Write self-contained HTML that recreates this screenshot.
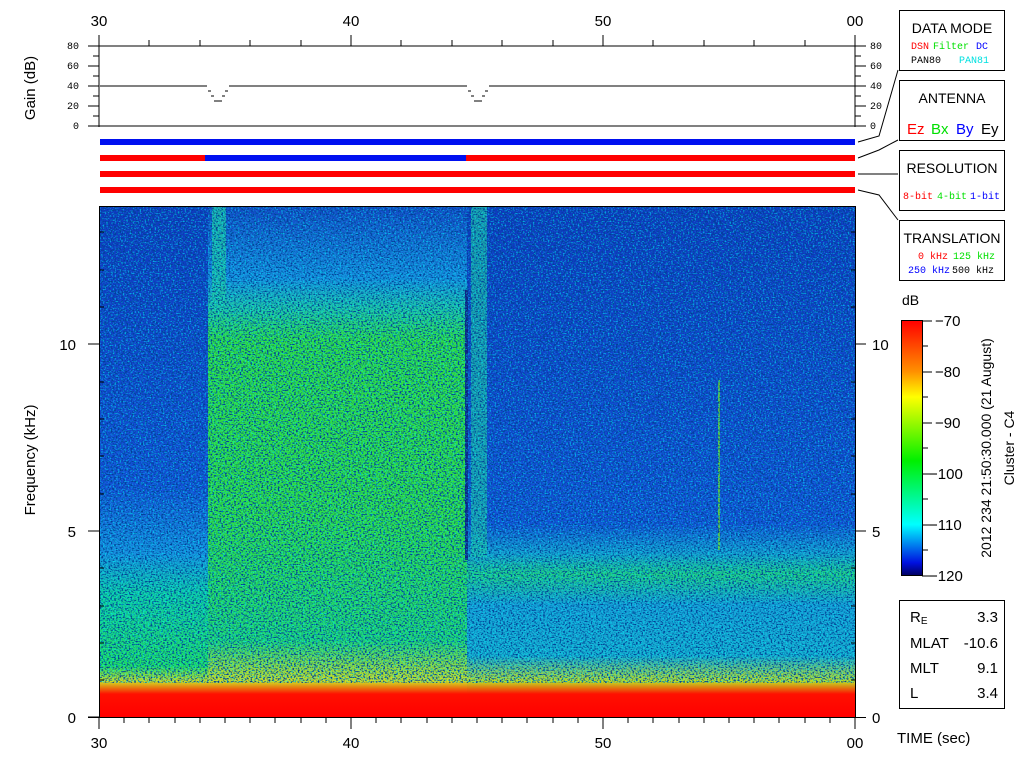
<!DOCTYPE html>
<html><head><meta charset="utf-8"><style>
html,body{margin:0;padding:0;background:#fff;width:1024px;height:768px;overflow:hidden}
svg text{font-family:"Liberation Sans",sans-serif}
svg .m text{font-family:"Liberation Mono",monospace}
</style></head><body>
<svg width="1024" height="768" viewBox="0 0 1024 768" xmlns="http://www.w3.org/2000/svg">
<defs>
<filter id="nz" x="0" y="0" width="100%" height="100%">
<feTurbulence type="fractalNoise" baseFrequency="0.55 0.7" numOctaves="1" seed="3" result="t"/>
<feColorMatrix in="t" type="matrix" values="0 0 0 0 0  0 0 0 0 0.05  0 0 0 0 0.3  0 0 0 4.5 -2.1"/>
</filter>
<filter id="nz2" x="0" y="0" width="100%" height="100%">
<feTurbulence type="fractalNoise" baseFrequency="0.6 0.75" numOctaves="1" seed="9" result="t"/>
<feColorMatrix in="t" type="matrix" values="0 0 0 0 0  0 0 0 0 0.9  0 0 0 0 1  0 0 0 4.5 -2.3"/>
</filter>
<linearGradient id="gl" x1="0" y1="0" x2="0" y2="1">
<stop offset="0" stop-color="#1038c0"/><stop offset="0.55" stop-color="#1450d8"/>
<stop offset="0.68" stop-color="#1890e0"/><stop offset="0.76" stop-color="#10d0a0"/>
<stop offset="0.9" stop-color="#20e060"/><stop offset="0.93" stop-color="#d0e020"/>
<stop offset="0.955" stop-color="#ff1000"/><stop offset="1" stop-color="#ff0000"/>
</linearGradient>
<linearGradient id="gg" x1="0" y1="0" x2="0" y2="1">
<stop offset="0" stop-color="#1448c8"/><stop offset="0.14" stop-color="#1890e0"/>
<stop offset="0.2" stop-color="#20c8a0"/><stop offset="0.26" stop-color="#30e040"/>
<stop offset="0.6" stop-color="#30e040"/><stop offset="0.85" stop-color="#20d870"/>
<stop offset="0.93" stop-color="#d0e020"/><stop offset="0.955" stop-color="#ff1000"/><stop offset="1" stop-color="#ff0000"/>
</linearGradient>
<linearGradient id="gr" x1="0" y1="0" x2="0" y2="1">
<stop offset="0" stop-color="#1038c0"/><stop offset="0.62" stop-color="#1450d8"/>
<stop offset="0.68" stop-color="#18a0d0"/><stop offset="0.72" stop-color="#20d080"/>
<stop offset="0.78" stop-color="#18a0d8"/><stop offset="0.88" stop-color="#18b0d0"/>
<stop offset="0.93" stop-color="#c0e020"/><stop offset="0.955" stop-color="#ff1000"/><stop offset="1" stop-color="#ff0000"/>
</linearGradient>
<linearGradient id="cb" x1="0" y1="0" x2="0" y2="1">
<stop offset="0" stop-color="#ff0000"/><stop offset="0.2" stop-color="#ff9000"/>
<stop offset="0.3" stop-color="#ffff00"/><stop offset="0.55" stop-color="#00f000"/>
<stop offset="0.8" stop-color="#00ffff"/><stop offset="0.95" stop-color="#0010e0"/><stop offset="1" stop-color="#000060"/>
</linearGradient>
</defs>

<!-- top axis -->
<g font-size="15" text-anchor="middle">
<text x="99" y="26">30</text><text x="351" y="26">40</text><text x="603" y="26">50</text><text x="855" y="26">00</text>
</g>
<g stroke="#000" stroke-width="1">
<line x1="99" y1="35" x2="99" y2="127"/><line x1="855" y1="35" x2="855" y2="127"/>
<line x1="88" y1="46" x2="866" y2="46"/><line x1="88" y1="126" x2="866" y2="126"/>
<path d="M149 40V46M200 40V46M250 40V46M301 40V46M351 35V46M401 40V46M452 40V46M502 40V46M553 40V46M603 35V46M653 40V46M704 40V46M754 40V46M805 40V46"/>
<path d="M93 56H99M88 66H99M93 76H99M88 86H99M93 96H99M88 106H99M93 116H99"/>
<path d="M855 56H861M855 66H866M855 76H861M855 86H866M855 96H861M855 106H866M855 116H861"/>
<path d="M100 86H207M208 91H211M225 91H228M211 96H214M222 96H225M214 101H222M229 86H467M468 91H471M485 91H488M471 96H474M482 96H485M474 101H482M489 86H855"/>
</g>
<g class="m" font-size="10" text-anchor="end"><text x="79" y="49">80</text><text x="79" y="69">60</text><text x="79" y="89">40</text><text x="79" y="109">20</text><text x="79" y="129">0</text></g>
<g class="m" font-size="10"><text x="870" y="49">80</text><text x="870" y="69">60</text><text x="870" y="89">40</text><text x="870" y="109">20</text><text x="870" y="129">0</text></g>
<text transform="translate(35,88) rotate(-90)" font-size="15" text-anchor="middle">Gain (dB)</text>

<!-- bars -->
<rect x="100" y="139" width="755" height="6" fill="#0010f0"/>
<rect x="100" y="155" width="105" height="6" fill="#ff0000"/>
<rect x="205" y="155" width="261" height="6" fill="#0010f0"/>
<rect x="466" y="155" width="389" height="6" fill="#ff0000"/>
<rect x="100" y="171" width="755" height="6" fill="#ff0000"/>
<rect x="100" y="187" width="755" height="6" fill="#ff0000"/>
<g stroke="#000" fill="none">
<path d="M858 142L879 136L898 70"/><path d="M858 158L879 150L898 140"/>
<path d="M858 174H898"/><path d="M858 190L879 195L898 220"/>
</g>

<!-- right boxes -->
<g fill="#fff" stroke="#000"><rect x="899.5" y="10.5" width="105" height="60"/><rect x="899.5" y="80.5" width="105" height="60"/><rect x="899.5" y="150.5" width="105" height="60"/><rect x="899.5" y="220.5" width="105" height="60"/></g>
<g font-size="14" text-anchor="middle" font-family="Liberation Serif"><text x="952" y="33">DATA MODE</text><text x="952" y="103">ANTENNA</text><text x="952" y="173">RESOLUTION</text><text x="952" y="243">TRANSLATION</text></g>
<g class="m" font-size="10"><text x="911" y="49" fill="#f00">DSN</text><text x="933" y="49" fill="#00e000">Filter</text><text x="976" y="49" fill="#00f">DC</text>
<text x="911" y="63">PAN80</text><text x="959" y="63" fill="#00e0e0">PAN81</text>
<text x="903" y="199" fill="#f00">8-bit</text><text x="937" y="199" fill="#00e000">4-bit</text><text x="970" y="199" fill="#00f">1-bit</text>
<text x="918" y="259" fill="#f00">0 kHz</text><text x="953" y="259" fill="#00e000">125 kHz</text>
<text x="908" y="273" fill="#00f">250 kHz</text><text x="952" y="273">500 kHz</text></g>
<g font-size="15" font-family="Liberation Serif"><text x="907" y="134" fill="#f00">Ez</text><text x="931" y="134" fill="#00e000">Bx</text><text x="956" y="134" fill="#00f">By</text><text x="981" y="134">Ey</text></g>

<!-- spectrogram -->
<rect x="100" y="207" width="108" height="510" fill="url(#gl)"/>
<rect x="208" y="207" width="259" height="510" fill="url(#gg)"/>
<rect x="467" y="207" width="388" height="510" fill="url(#gr)"/>
<rect x="212" y="207" width="14" height="100" fill="#20c8a0" opacity="0.8"/>
<rect x="471" y="207" width="16" height="350" fill="#20c8a0" opacity="0.7"/>
<rect x="465" y="290" width="3" height="270" fill="#102080"/>
<rect x="718" y="380" width="2" height="170" fill="#70e020" opacity="0.8"/>
<rect x="100" y="207" width="755" height="476" filter="url(#nz)"/>
<rect x="100" y="207" width="755" height="476" filter="url(#nz2)" opacity="0.6"/>
<g stroke="#000" fill="none">
<line x1="99.5" y1="206" x2="99.5" y2="718"/><line x1="855.5" y1="206" x2="855.5" y2="718"/>
<line x1="99" y1="206.5" x2="856" y2="206.5"/>
<line x1="88" y1="717.5" x2="866" y2="717.5"/>
<path d="M88 717H99M99 680H104M99 643H104M99 606H104M99 568H104M88 531H99M99 494H104M99 456H104M99 419H104M99 382H104M88 344H99M99 307H104M99 270H104M99 232H104"/>
<path d="M855 680H851M855 643H851M855 606H851M855 568H851M855 531H866M855 494H851M855 456H851M855 419H851M855 382H851M855 344H866M855 307H851M855 270H851M855 232H851"/>
<path d="M99 718V729M124 718V723M149 718V723M175 718V723M200 718V723M225 718V723M250 718V723M275 718V723M301 718V723M326 718V723M351 718V729M376 718V723M401 718V723M427 718V723M452 718V723M477 718V723M502 718V723M527 718V723M553 718V723M578 718V723M603 718V729M628 718V723M653 718V723M679 718V723M704 718V723M729 718V723M754 718V723M779 718V723M805 718V723M830 718V723M855 718V729"/>
</g>
<g font-size="15" text-anchor="end"><text x="76" y="350">10</text><text x="76" y="537">5</text><text x="76" y="723">0</text></g>
<g font-size="15"><text x="872" y="350">10</text><text x="872" y="537">5</text><text x="872" y="723">0</text></g>
<g font-size="15" text-anchor="middle"><text x="99" y="748">30</text><text x="351" y="748">40</text><text x="603" y="748">50</text><text x="855" y="748">00</text></g>
<text transform="translate(35,460) rotate(-90)" font-size="15" text-anchor="middle">Frequency (kHz)</text>

<!-- colorbar -->
<text x="902" y="305" font-size="14">dB</text>
<rect x="901.5" y="320.5" width="21" height="255" fill="url(#cb)" stroke="#000"/>
<g stroke="#000"><path d="M922 321H932M922 346H928M922 372H928M922 397H928M922 423H932M922 448H928M922 474H928M922 499H928M922 525H932M922 550H928M922 576H932M922 372H932M922 474H932"/></g>
<g font-size="15"><text x="935" y="326">−70</text><text x="935" y="377">−80</text><text x="935" y="428">−90</text><text x="929" y="479">−100</text><text x="929" y="530">−110</text><text x="929" y="581">−120</text></g>
<text transform="translate(991,448) rotate(-90)" font-size="14" text-anchor="middle">2012 234 21:50:30.000 (21 August)</text>
<text transform="translate(1014,448) rotate(-90)" font-size="14" text-anchor="middle">Cluster - C4</text>

<!-- info box -->
<rect x="899.5" y="600.5" width="105" height="108" fill="#fff" stroke="#000"/>
<g font-size="15"><text x="910" y="622">R<tspan font-size="10" dy="2">E</tspan></text><text x="910" y="648">MLAT</text><text x="910" y="673">MLT</text><text x="910" y="698">L</text></g>
<g font-size="15" text-anchor="end"><text x="998" y="622">3.3</text><text x="998" y="648">-10.6</text><text x="998" y="673">9.1</text><text x="998" y="698">3.4</text></g>
<text x="897" y="743" font-size="15">TIME (sec)</text>
</svg>
</body></html>
